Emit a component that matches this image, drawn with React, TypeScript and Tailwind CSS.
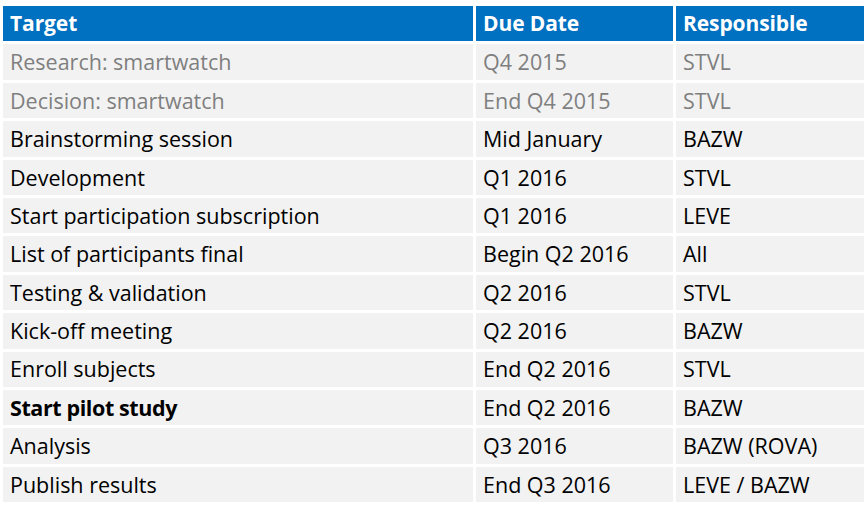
const rows: { target: string; due: string; resp: string; muted?: boolean; bold?: boolean }[] = [
  { target: "Research: smartwatch", due: "Q4 2015", resp: "STVL", muted: true },
  { target: "Decision: smartwatch", due: "End Q4 2015", resp: "STVL", muted: true },
  { target: "Brainstorming session", due: "Mid January", resp: "BAZW" },
  { target: "Development", due: "Q1 2016", resp: "STVL" },
  { target: "Start participation subscription", due: "Q1 2016", resp: "LEVE" },
  { target: "List of participants final", due: "Begin Q2 2016", resp: "All" },
  { target: "Testing & validation", due: "Q2 2016", resp: "STVL" },
  { target: "Kick-off meeting", due: "Q2 2016", resp: "BAZW" },
  { target: "Enroll subjects", due: "End Q2 2016", resp: "STVL" },
  { target: "Start pilot study", due: "End Q2 2016", resp: "BAZW", bold: true },
  { target: "Analysis", due: "Q3 2016", resp: "BAZW (ROVA)" },
  { target: "Publish results", due: "End Q3 2016", resp: "LEVE / BAZW" },
]

export default function App() {
  return (
    <div className="w-[868px] h-[513px] bg-white pt-[6px] pl-[3px] font-['Open_Sans',sans-serif]">
      <div className="grid grid-cols-[470px_197px_188px] auto-rows-[35.4px] gap-[3px]">
        {["Target", "Due Date", "Responsible"].map((h) => (
          <div key={h} className="bg-[#0070c0] text-white font-bold text-[21px] tracking-[-0.1px] px-[7px] flex items-center">
            {h}
          </div>
        ))}
        {rows.map((r) =>
          [r.target, r.due, r.resp].map((c, i) => (
            <div
              key={r.target + i}
              className={`bg-[#f2f2f2] text-[21.5px] px-[7px] flex items-center leading-none ${
                r.muted ? "text-[#7f7f7f]" : "text-black"
              } ${r.bold && i === 0 ? "font-bold tracking-[-0.4px]" : ""}`}
            >
              {c}
            </div>
          ))
        )}
      </div>
    </div>
  )
}
